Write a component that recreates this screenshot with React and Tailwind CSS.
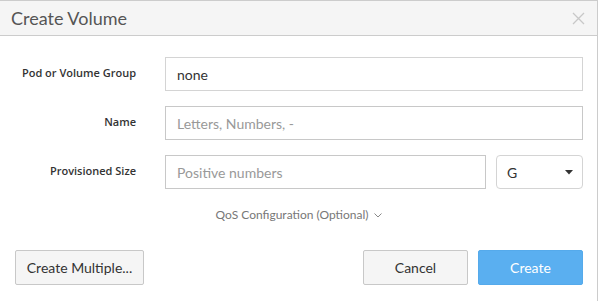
export default function App() {
  return (
    <div className="w-[598px] h-[301px] bg-white border-t border-r border-[#cccccc] font-['Lato',sans-serif] flex flex-col">
      <div className="h-[35px] bg-[#f5f5f5] border-b border-[#cccccc] flex items-center justify-between pl-[11px] pr-[11px]">
        <span className="text-[18px] text-[#555555] leading-none">Create Volume</span>
        <svg width="13" height="13" viewBox="0 0 13 13" className="mr-[1px]">
          <path d="M1 1 L12 12 M12 1 L1 12" stroke="#c8c8c8" strokeWidth="1.3" />
        </svg>
      </div>
      <div className="flex flex-col pl-[15px] pr-[14px] pt-[21px]">
        <div className="flex flex-col gap-[15px]">
          <div className="flex items-center">
            <label className="w-[121px] -mt-[2px] text-right text-[11px] font-semibold font-['Open_Sans',sans-serif] text-[#333333] whitespace-nowrap">Pod or Volume Group</label>
            <div className="ml-[29px] flex-1 h-[34px] border border-[#d4d4d4] flex items-center px-[11px] text-[14px] text-[#333333]">none</div>
          </div>
          <div className="flex items-center">
            <label className="w-[121px] -mt-[2px] text-right text-[11px] font-semibold font-['Open_Sans',sans-serif] text-[#333333] whitespace-nowrap">Name</label>
            <div className="ml-[29px] flex-1 h-[34px] border border-[#c8c8c8] flex items-center px-[11px] text-[14px] text-[#999999]">Letters, Numbers, -</div>
          </div>
          <div className="flex items-center">
            <label className="w-[121px] -mt-[2px] text-right text-[11px] font-semibold font-['Open_Sans',sans-serif] text-[#333333] whitespace-nowrap">Provisioned Size</label>
            <div className="ml-[29px] flex-1 h-[34px] border border-[#c8c8c8] flex items-center px-[11px] text-[14px] text-[#999999]">Positive numbers</div>
            <div className="ml-[10px] w-[87px] h-[34px] border border-[#d4d4d4] rounded-[4px] flex items-center justify-between pl-[10px] pr-[9px] text-[14px] text-[#333333]">
              <span>G</span>
              <svg width="8" height="5" viewBox="0 0 8 5"><path d="M0 0 H8 L4 4.5 Z" fill="#333333" /></svg>
            </div>
          </div>
        </div>
        <div className="mt-[17px] flex items-center justify-center gap-[6px] text-[12px] text-[#777777]">
          <span>QoS Configuration (Optional)</span>
          <svg width="8" height="5" viewBox="0 0 8 5"><path d="M0.5 0.5 L4 4 L7.5 0.5" stroke="#888888" strokeWidth="1" fill="none" /></svg>
        </div>
        <div className="mt-[26px] flex items-center">
          <button className="w-[129px] h-[35px] border border-[#c8c8c8] rounded-[2px] bg-[#f5f5f5] text-[14px] text-[#333333]">Create Multiple...</button>
          <div className="flex-1" />
          <button className="w-[105px] h-[35px] border border-[#c8c8c8] rounded-[2px] bg-[#f5f5f5] text-[14px] text-[#333333]">Cancel</button>
          <button className="ml-[10px] w-[105px] h-[35px] border border-[#55aaeb] rounded-[2px] bg-[#5aaff0] text-[14px] text-white">Create</button>
        </div>
      </div>
    </div>
  );
}
